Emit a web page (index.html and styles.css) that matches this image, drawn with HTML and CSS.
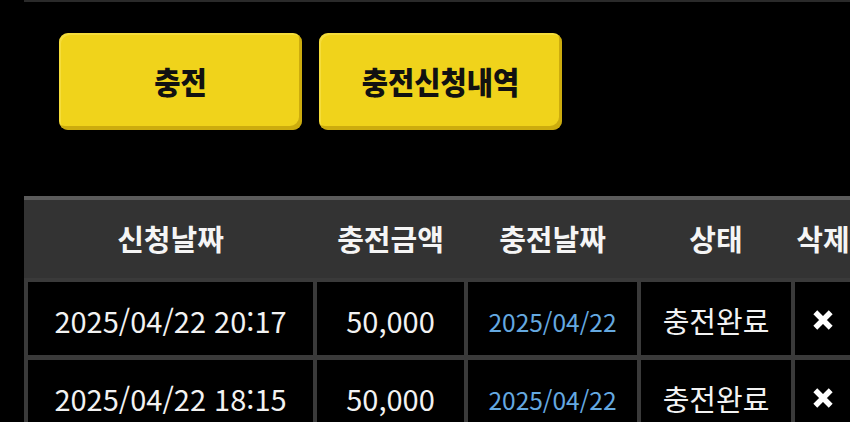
FILE: index.html
```html
<!DOCTYPE html>
<html lang="ko">
<head>
<meta charset="UTF-8">
<meta name="viewport" content="width=device-width, initial-scale=1.0">
<title>충전신청내역</title>
<link rel="stylesheet" href="styles.css">
</head>
<body>

<div id="page">
  <div class="top-rule"></div>

  <div class="tabs">
    <button class="tab-btn"><span>충전</span></button>
    <button class="tab-btn"><span>충전신청내역</span></button>
  </div>

  <div class="history">
    <div class="history-head">
      <div>신청날짜</div>
      <div>충전금액</div>
      <div>충전날짜</div>
      <div>상태</div>
      <div>삭제</div>
    </div>
    <div class="history-body">
      <div class="cell">2025/04/22 20:17</div>
      <div class="cell">50,000</div>
      <div class="cell date">2025/04/22</div>
      <div class="cell">충전완료</div>
      <div class="cell"><svg class="del" viewBox="0 0 20 20"><path d="M3 3L17 17M17 3L3 17"/></svg></div>

      <div class="cell">2025/04/22 18:15</div>
      <div class="cell">50,000</div>
      <div class="cell date">2025/04/22</div>
      <div class="cell">충전완료</div>
      <div class="cell"><svg class="del" viewBox="0 0 20 20"><path d="M3 3L17 17M17 3L3 17"/></svg></div>
    </div>
  </div>
</div>

</body>
</html>
```

FILE: styles.css
```css
* { margin: 0; padding: 0; box-sizing: border-box; }

body {
  font-family: "Noto Sans CJK KR", "Noto Sans", sans-serif;
  background: #000;
  color: #f2f2f2;
  height: 100vh;
  overflow: hidden;
}

#page {
  padding-left: 24px;
  width: 880px;
}

.top-rule {
  border-top: 2px solid #2a2a2a;
}

.tabs {
  display: flex;
  gap: 17px;
  padding: 31px 0 0 35px;
}

.tab-btn {
  width: 243px;
  height: 97px;
  border: none;
  border-radius: 9px;
  background: #f0d31b;
  box-shadow: inset -3px -4px 0 rgba(160,125,0,0.45), inset 2px 2px 0 rgba(255,240,120,0.35);
  font-family: inherit;
  font-size: 31px;
  font-weight: 800;
  color: #111;
  padding-bottom: 2px;
  cursor: pointer;
}

/* label face is a narrow bold, so squeeze it a little */
.tab-btn span {
  display: inline-block;
  transform: scaleX(0.92);
}

.history {
  margin-top: 66px;
  width: 831px;
}

.history-head,
.history-body {
  display: grid;
  grid-template-columns: 285px 147px 169px 150px 56px;
  column-gap: 4px;
  padding: 0 4px;
}

.history-head {
  background: #333;
  border-top: 4px solid #5b5b5b;
  height: 82px;
  align-items: center;
  font-size: 29px;
  font-weight: 700;
  text-align: center;
  color: #f5f5f5;
}

.history-head div { white-space: nowrap; padding-bottom: 2px; }

.history-body {
  background: #3a3a3a;
  padding-top: 4px;
  row-gap: 5px;
  grid-auto-rows: 73px;
}

.cell {
  background: #000;
  display: flex;
  align-items: center;
  justify-content: center;
  font-size: 29px;
  white-space: nowrap;
  padding-top: 3px;
}

.cell.date {
  font-size: 24.5px;
  color: #65a9e0;
  padding-top: 5px;
}

.del {
  width: 22px;
  height: 22px;
  fill: none;
  stroke: #fff;
  stroke-width: 5;
}
```
